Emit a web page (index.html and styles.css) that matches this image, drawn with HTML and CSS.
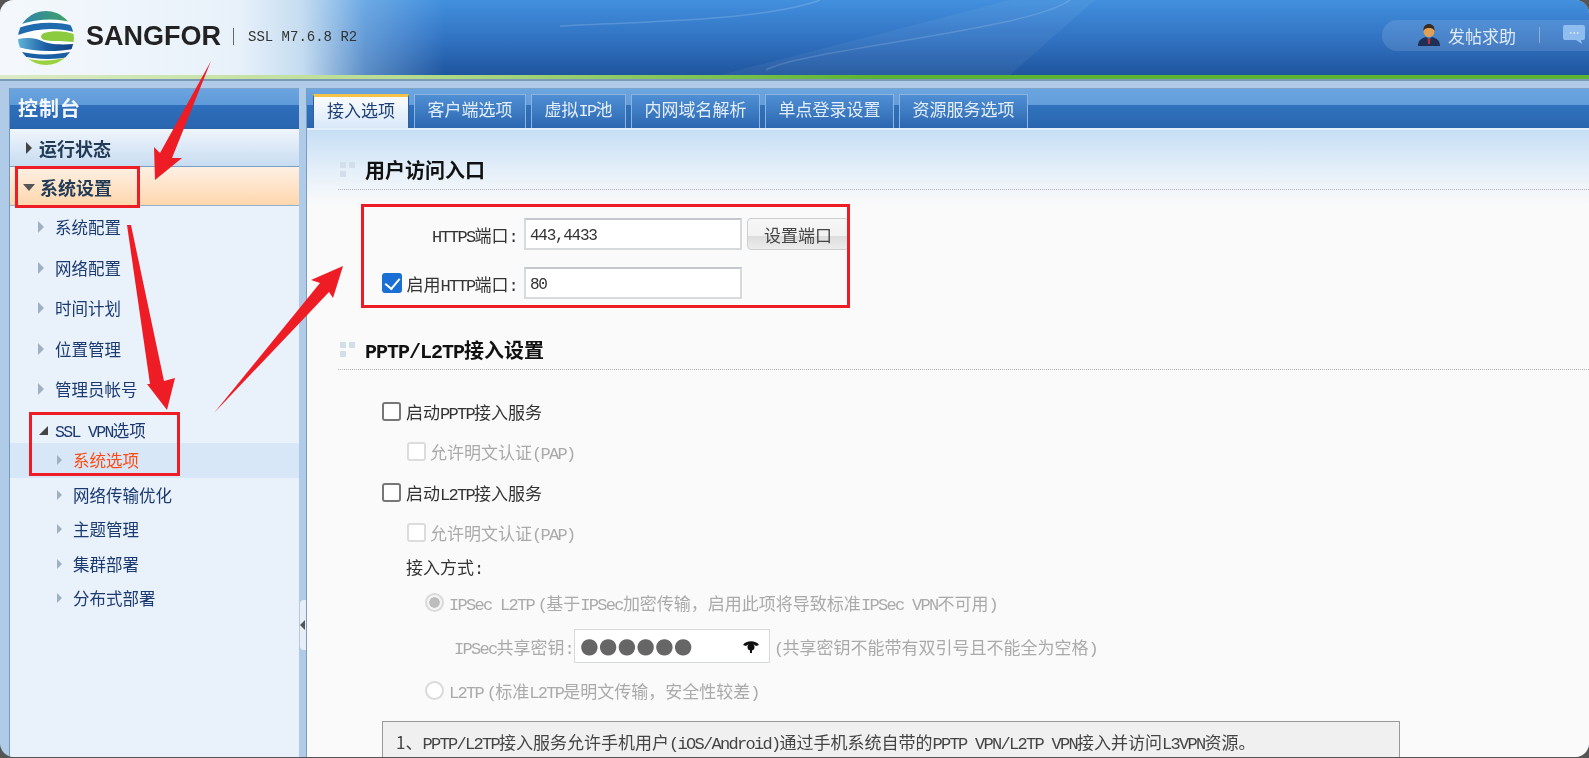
FILE: index.html
```html
<!DOCTYPE html>
<html lang="zh-CN">
<head>
  <meta charset="UTF-8">
  <title>SANGFOR SSL M7.6.8 R2</title>
  <link rel="stylesheet" href="styles.css">
</head>
<body>
<div class="window">

  <header class="top">
    <svg class="swoosh" viewBox="0 0 1589 75" width="1589" height="75">
      <path d="M1010 75L1300 0H1385L1300 75Z" fill="#fff" opacity=".05" transform="translate(-290)"/>
      <path d="M1060 0C1000 22 860 22 800 26" fill="none" stroke="#fff" stroke-width="1.500" opacity=".16" transform="translate(-240)"/>
      <path d="M866 70C900 50 1130 30 1170 0" fill="none" stroke="#fff" stroke-width="1.500" opacity=".14" transform="translate(-100)"/>
    </svg>
    <svg class="logo" viewBox="0 0 56 54" width="56" height="54">
      <defs>
        <clipPath id="ball"><ellipse cx="28" cy="27" rx="28" ry="27"/></clipPath>
        <linearGradient id="gTop" x1="0" y1="0" x2="1" y2="0"><stop offset="0" stop-color="#2f7fb5"/><stop offset="1" stop-color="#3fa85a"/></linearGradient>
        <linearGradient id="gMid" x1="0" y1="0" x2="1" y2="0"><stop offset="0" stop-color="#5fb4d8"/><stop offset=".5" stop-color="#1b5fa5"/><stop offset="1" stop-color="#12407f"/></linearGradient>
      </defs>
      <g clip-path="url(#ball)">
        <rect width="56" height="54" fill="#fff"/>
        <path d="M0 0H56V12C40 7 22 7 0 14Z" fill="url(#gTop)"/>
        <path d="M0 17C18 11 38 10 56 15V21C38 16 18 17 0 24Z" fill="#1f6bad"/>
        <path d="M26 22C36 19 48 20 56 23V31C46 30 36 31 26 29C22 27 22 24 26 22Z" fill="#8ccb3f"/>
        <path d="M0 28C10 26 18 27 24 30C30 33 40 34 56 33V38C38 41 16 41 0 36Z" fill="url(#gMid)"/>
        <path d="M0 40C18 45 38 44 56 40V45C38 49 18 49 0 44Z" fill="#1b5fa5"/>
        <path d="M8 47C22 51 36 50 50 46V54H8Z" fill="#9ad13f"/>
      </g>
    </svg>
    <span class="brand">SANGFOR</span>
    <span class="brand-sep"></span>
    <span class="version">SSL M7.6.8 R2</span>
    <div class="help">
      <svg viewBox="0 0 22 22" width="22" height="22">
        <path d="M0 22C0 16 4 14 8 13L11 15L14 13C18 14 22 16 22 22Z" fill="#1f2f55"/>
        <path d="M9.5 14L11 15.5L12.5 14L12 20H10Z" fill="#b8323a"/>
        <circle cx="11" cy="7.5" r="5.5" fill="#e0a055"/>
        <path d="M5.5 7C5 2 8 0 11 0S17 2 16.5 7C15 4 13 4 11 4S7 4 5.500 7Z" fill="#3a2a20"/>
      </svg>
      <span class="help-text">发帖求助</span>
      <span class="help-sep"></span>
      <svg viewBox="0 0 22 20" width="22" height="20">
        <path d="M2 0H20Q22 0 22 2V13Q22 15 20 15H18L19 19L13 15H2Q0 15 0 13V2Q0 0 2 0Z" fill="#8fbdf0"/>
        <path d="M7 8H8.500M10.500 8H12M14 8H15.500" stroke="#e8f2fc" stroke-width="1.500"/>
      </svg>
    </div>
  </header>

  <div class="layout">
    <aside class="side">
      <h2 class="side-title">控制台</h2>
      <div class="group">
        <span class="tri-right"></span>运行状态
      </div>
      <div class="group group-open">
        <span class="tri-down"></span>系统设置
      </div>
      <ul class="menu">
        <li class="menu-item"><span class="chev"></span>系统配置</li>
        <li class="menu-item"><span class="chev"></span>网络配置</li>
        <li class="menu-item"><span class="chev"></span>时间计划</li>
        <li class="menu-item"><span class="chev"></span>位置管理</li>
        <li class="menu-item"><span class="chev"></span>管理员帐号</li>
        <li class="menu-open"><span class="tri-open"></span><span><span class="en">SSL VPN</span>选项</span></li>
        <li class="sub-item sub-active"><span class="chev chev-sm"></span>系统选项</li>
        <li class="sub-item"><span class="chev chev-sm"></span>网络传输优化</li>
        <li class="sub-item"><span class="chev chev-sm"></span>主题管理</li>
        <li class="sub-item"><span class="chev chev-sm"></span>集群部署</li>
        <li class="sub-item"><span class="chev chev-sm"></span>分布式部署</li>
      </ul>
    </aside>

    <main class="main">
      <nav class="tabs">
        <a class="tab tab-active">接入选项</a>
        <a class="tab">客户端选项</a>
        <a class="tab">虚拟<span class="en">IP</span>池</a>
        <a class="tab">内网域名解析</a>
        <a class="tab">单点登录设置</a>
        <a class="tab">资源服务选项</a>
      </nav>

      <div class="content">
        <h3 class="sec-head"><span class="sec-icon"><i></i><i></i><i></i></span><span>用户访问入口</span></h3>
        <div class="ports">
          <label class="port-label"><span><span class="en">HTTPS</span>端口<span class="en">:</span></span></label>
          <input class="field" type="text" value="443,4433">
          <button class="btn">设置端口</button>
          <label class="port-label"><input class="cb cb-on" type="checkbox" checked><span>启用<span class="en">HTTP</span>端口<span class="en">:</span></span></label>
          <input class="field" type="text" value="80">
        </div>

        <h3 class="sec-head sec-second"><span class="sec-icon"><i></i><i></i><i></i></span><span><span class="en">PPTP/L2TP</span>接入设置</span></h3>
        <div class="opts">
          <div class="opt"><input class="cb" type="checkbox"><span>启动<span class="en">PPTP</span>接入服务</span></div>
          <div class="opt opt-off opt-in"><input class="cb cb-off" type="checkbox" disabled><span>允许明文认证<span class="en">(PAP)</span></span></div>
          <div class="opt"><input class="cb" type="checkbox"><span>启动<span class="en">L2TP</span>接入服务</span></div>
          <div class="opt opt-off opt-in"><input class="cb cb-off" type="checkbox" disabled><span>允许明文认证<span class="en">(PAP)</span></span></div>
          <div class="opt opt-way"><span>接入方式<span class="en">:</span></span></div>
          <div class="opt opt-off opt-radio"><input class="rd" type="radio" name="way" checked disabled><span><span class="en">IPSec L2TP</span>&nbsp;<span class="en">(</span>基于<span class="en">IPSec</span>加密传输，启用此项将导致标准<span class="en">IPSec VPN</span>不可用<span class="en">)</span></span></div>
          <div class="opt opt-off opt-key"><span><span class="en">IPSec</span>共享密钥<span class="en">:</span></span>
            <div class="pwd">
              <span class="pwd-dots">●●●●●●</span>
              <svg viewBox="0 0 18 14" width="18" height="14"><path d="M1 6C4 1 14 1 17 6L14 7C12 4.500 6 4.500 4 7Z" fill="#111"/><circle cx="9" cy="8" r="3.500" fill="#111"/><path d="M8 11H10V14H8Z" fill="#111"/></svg>
            </div>
            <span><span class="en">(</span>共享密钥不能带有双引号且不能全为空格<span class="en">)</span></span>
          </div>
          <div class="opt opt-off opt-radio"><input class="rd" type="radio" name="way" disabled><span><span class="en">L2TP</span>&nbsp;<span class="en">(</span>标准<span class="en">L2TP</span>是明文传输，安全性较差<span class="en">)</span></span></div>
        </div>
        <div class="note">1、<span class="en">PPTP/L2TP</span>接入服务允许手机用户<span class="en">(iOS/Android)</span>通过手机系统自带的<span class="en">PPTP VPN/L2TP VPN</span>接入并访问<span class="en">L3VPN</span>资源。</div>
      </div>
    </main>

    <div class="collapse"><span></span></div>
  </div>

  <!-- red marks drawn over the screenshot -->
  <svg class="marks" viewBox="0 0 1589 758" width="1589" height="758">
    <g fill="none" stroke="#ee1c25" stroke-width="3">
      <rect x="16.500" y="167.500" width="122" height="39"/>
      <rect x="30.500" y="413.500" width="148" height="61"/>
      <rect x="362.500" y="205.500" width="486" height="101"/>
    </g>
    <g fill="#ee1c25">
      <polygon points="211,61 172,158 182,158 155,180 154,147 160,153"/>
      <polygon points="127,225 150,384 147,384 167,410 175,378 164,381 131,225"/>
      <polygon points="214,413 320,283 311,280 343,266 333,298 329,292"/>
    </g>
  </svg>
</div>
</body>
</html>
```
FILE: styles.css
```css
* {
  box-sizing: border-box;
}

html, body {
  margin: 0;
  height: 100%;
  background-color: #555;
  overflow: hidden;
}

body {
  font-family: "Noto Sans CJK SC", sans-serif;
  font-size: 17px;
  color: #333;
}

.window {
  position: relative;
  width: 1589px;
  height: 757px;
  border-radius: 14px;
  overflow: hidden;
  background-color: #b0cbe7;
}

.en {
  font-family: "Liberation Mono", monospace;
  letter-spacing: -.1em;
}

/* header */
.top {
  position: relative;
  display: flex;
  align-items: center;
  height: 81px;
  padding: 0 0 6px 18px;
  border-bottom: 2px solid #7a9ab8;
  background:
    linear-gradient(90deg, #dcebc4 0, #b8dc90 25%, #5cb531 55%) left bottom / 100% 4px no-repeat,
    linear-gradient(90deg, #f4f8fc 0, #e8f1fa 15%, #c5dcf0 19%, rgba(150, 195, 235, .5) 23%, rgba(70, 140, 215, 0) 28%),
    linear-gradient(180deg, #4290de 0, #3172c2 50%, #1d5299 100%);
  filter: blur(.3px);
}

.swoosh {
  position: absolute;
  left: 0;
  top: 0;
}

.logo {
  position: relative;
  margin-top: 2px;
}

.brand {
  position: relative;
  margin-left: 12px;
  font-family: "Liberation Sans", sans-serif;
  font-weight: 700;
  font-size: 27px;
  color: #222;
}

.brand-sep {
  position: relative;
  width: 1px;
  height: 17px;
  margin-left: 12px;
  background-color: #666;
}

.version {
  position: relative;
  margin-left: 14px;
  font-family: "Liberation Mono", monospace;
  font-size: 14px;
  color: #333;
}

.help {
  position: relative;
  display: flex;
  align-items: center;
  height: 31px;
  margin-left: auto;
  margin-top: -3px;
  width: 207px;
  padding-left: 36px;
  border-radius: 16px 0 0 16px;
  background-color: rgba(255, 255, 255, .12);
}

.help-text {
  margin-left: 8px;
  color: #dfeaf5;
}

.help-sep {
  width: 1px;
  height: 16px;
  margin: 0 23px;
  background-color: #8fb0d2;
}

/* page columns */
.layout {
  position: relative;
  display: flex;
  height: 676px;
  padding: 7px 0 0 9px;
  border-left: 1px solid #8a9cb0;
  margin-left: -1px;
  filter: blur(.3px);
}

.side {
  width: 290px;
  height: 669px;
  margin-right: 7px;
  border-left: 1px solid #7499bd;
  background-color: #e9f2fb;
  flex-shrink: 0;
}

.side-title {
  height: 41px;
  margin: 0;
  padding-left: 8px;
  border-top: 1px solid #7fa3c8;
  border-bottom: 1px solid #2a62a8;
  background: linear-gradient(180deg, #6aa4e0 0, #5f9ad9 40%, #2f6fbb 41%, #2a65b0 100%);
  font-size: 20px;
  font-weight: 700;
  line-height: 38px;
  letter-spacing: 1px;
  color: #f2f7fd;
}

.group {
  display: flex;
  align-items: center;
  height: 38px;
  padding-left: 16px;
  border-bottom: 1px solid #7a9ec4;
  background: linear-gradient(180deg, #eff5fc, #c8dcf1);
  font-size: 18px;
  font-weight: 700;
  color: #223c58;
}

.group-open {
  height: 39px;
  padding: 2px 0 0 13px;
  border-bottom-color: #8fb0d0;
  background: linear-gradient(180deg, #fdf0e4, #ffd7ad);
}

.tri-right {
  width: 0;
  height: 0;
  margin-right: 7px;
  border-left: 6px solid #444;
  border-top: 6px solid transparent;
  border-bottom: 6px solid transparent;
}

.tri-down {
  width: 0;
  height: 0;
  margin-right: 5px;
  border-top: 7px solid #555;
  border-left: 6px solid transparent;
  border-right: 6px solid transparent;
}

.menu {
  margin: 0;
  padding: 1px 0 0;
  list-style: none;
  font-size: 16.5px;
  color: #1c3a72;
}

.menu-item {
  display: flex;
  align-items: center;
  height: 40.500px;
  padding-left: 28px;
}

.menu-open {
  display: flex;
  align-items: center;
  height: 33.500px;
  padding: 8px 0 0 29px;
}

.tri-open {
  width: 0;
  height: 0;
  margin-right: 7px;
  border-bottom: 9px solid #444;
  border-left: 9px solid transparent;
}

.sub-item {
  display: flex;
  align-items: center;
  height: 34.500px;
  padding-left: 47px;
}

.sub-active {
  background-color: #d8e7f8;
  color: #ff4a12;
}

.chev {
  width: 0;
  height: 0;
  margin-right: 11px;
  border-left: 6px solid #9fb0c4;
  border-top: 6px solid transparent;
  border-bottom: 6px solid transparent;
}

.chev-sm {
  margin-right: 11px;
  border-left-width: 5px;
  border-top-width: 5px;
  border-bottom-width: 5px;
}

.collapse {
  position: absolute;
  left: 300px;
  top: 519px;
  display: flex;
  align-items: center;
  width: 6px;
  height: 50px;
  border-radius: 4px 0 0 4px;
  background-color: #e8eef5;
}

.collapse span {
  width: 0;
  height: 0;
  border-right: 5px solid #555;
  border-top: 5px solid transparent;
  border-bottom: 5px solid transparent;
}

/* tabs */
.main {
  flex: 1;
  min-width: 0;
  border-left: 1px solid #7a9cc0;
}

.tabs {
  display: flex;
  align-items: flex-end;
  gap: 5px;
  height: 42px;
  padding-left: 6px;
  border-top: 1px solid #7fa3c8;
  border-bottom: 2px solid #e2eefa;
  background: linear-gradient(180deg, #6aa5e0 0, #639ddb 40%, #3072bd 41%, #2a66b0 100%);
}

.tab {
  height: 34px;
  padding: 0 12.500px;
  border: 1px solid #8fb4dc;
  border-bottom: none;
  background: linear-gradient(180deg, #4f8fd4, #2b67b1);
  line-height: 28px;
  color: #e4eef9;
}

.tab-active {
  padding: 0 13px;
  border-top: 3px solid #f5c24a;
  border-color: #f5c24a #2f5f9c #d8e8f8;
  background: linear-gradient(180deg, #fafcfe, #d8e8f8);
  line-height: 26px;
  color: #1d3f75;
}

.content {
  height: 627px;
  padding: 0 0 0 31px;
  background: linear-gradient(180deg, #c6def4 0, #e4eff9 40px, #fafafa 75px);
}

.sec-head {
  display: flex;
  align-items: center;
  height: 60px;
  margin: 0;
  padding: 20px 0 0 2px;
  border-bottom: 1px dotted #b5b5b5;
  font-size: 20px;
  font-weight: 700;
  color: #111;
}

.sec-head .en {
  letter-spacing: -.05em;
}

.sec-second {
  height: 70px;
  padding-top: 30px;
}

.sec-icon {
  display: grid;
  grid-template-columns: 6px 6px;
  grid-auto-rows: 6px;
  gap: 3px;
  margin-right: 10px;
}

.sec-icon i {
  background-color: #d3deeb;
}

/* port form */
.ports {
  display: grid;
  grid-template-columns: 136px 218px auto;
  grid-auto-rows: 32px;
  align-items: center;
  column-gap: 7px;
  row-gap: 17px;
  margin: 28px 0 1px 43px;
  width: 470px;
}

.port-label {
  display: flex;
  align-items: center;
  justify-content: flex-end;
  color: #333;
}

.field {
  width: 218px;
  height: 32px;
  padding: 3px 4px 0;
  border: 2px solid #d6dadd;
  border-top-color: #c4c8cc;
  background-color: #fff;
  font-family: "Liberation Mono", monospace;
  font-size: 16px;
  letter-spacing: -.08em;
  color: #333;
}

.btn {
  width: 102px;
  height: 32px;
  margin-left: -2px;
  padding: 0;
  border: 1px solid #cfcfcf;
  border-radius: 4px;
  background: linear-gradient(180deg, #f6f6f6 0, #f2f2f2 55%, #dcdcdc 56%, #ececec 100%);
  font-family: inherit;
  font-size: 17px;
  color: #444;
}

.cb, .rd {
  appearance: none;
  flex-shrink: 0;
  margin: 0;
}

.cb {
  position: relative;
  width: 19px;
  height: 19px;
  margin-right: 5px;
  border: 2px solid #777;
  border-radius: 3px;
  background-color: #fff;
}

.cb-on {
  width: 20px;
  height: 20px;
  margin-right: 4px;
  border-color: #1a6fd4;
  background-color: #1a6fd4;
}

.cb-on::after {
  content: "";
  position: absolute;
  left: 4px;
  top: 0;
  width: 7px;
  height: 12px;
  border-right: 2.500px solid #fff;
  border-bottom: 2.500px solid #fff;
  transform: rotate(40deg);
}

.cb-off {
  margin-right: 4px;
  border-color: #dcdcdc;
}

.rd {
  width: 19px;
  height: 19px;
  margin-right: 5px;
  border: 2px solid #dadada;
  border-radius: 50%;
  background-color: #fff;
}

.rd:checked {
  background: radial-gradient(circle, #bdbdbd 0, #bdbdbd 5px, #f4f4f4 5.500px);
}

/* access options */
.opts {
  margin-left: 44px;
  padding-top: 21px;
}

.opt {
  display: flex;
  align-items: center;
  height: 40.500px;
  color: #333;
}

.opt-off {
  color: #aaa;
}

.opt-in {
  padding-left: 25px;
}

.opt-way {
  height: 26px;
  padding-left: 24px;
}

.opt-radio {
  height: 46px;
  padding-left: 43px;
}

.opt-key {
  height: 42px;
  padding-left: 72px;
}

.pwd {
  display: flex;
  align-items: center;
  justify-content: space-between;
  width: 196px;
  height: 34px;
  margin: 0 4px 0 1px;
  padding: 0 9px 0 5px;
  border: 1px solid #d6dadd;
  background-color: #fff;
}

.pwd-dots {
  font-family: "DejaVu Sans", sans-serif;
  font-size: 21.500px;
  line-height: 1;
  color: #666;
}

.note {
  width: 1018px;
  height: 36px;
  margin: 8px 0 0 44px;
  padding: 7px 0 0 13px;
  border: 1px solid #999;
  border-bottom: none;
  background-color: #f0f0f0;
  color: #444;
  white-space: nowrap;
}

.marks {
  position: absolute;
  left: 0;
  top: 0;
  pointer-events: none;
}
```
